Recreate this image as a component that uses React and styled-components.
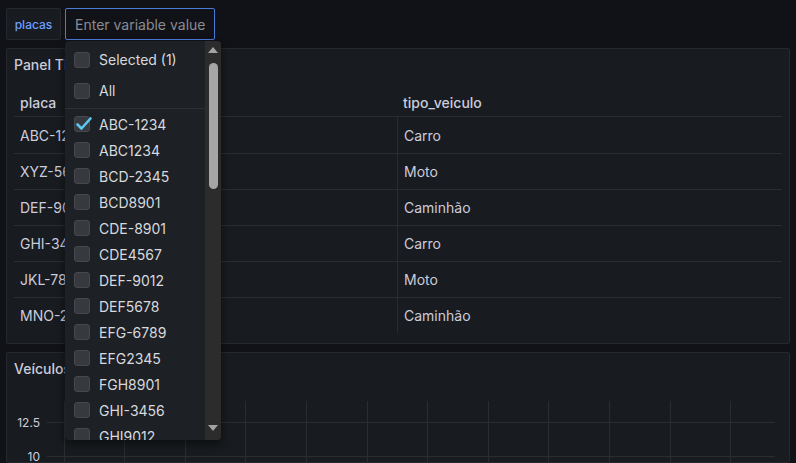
import React from "react";
import styled, { createGlobalStyle } from "styled-components";

const GlobalStyle = createGlobalStyle`
  html, body {
    margin: 0;
    padding: 0;
    background: #111217;
    overflow: hidden;
  }
  body {
    font-family: Inter, "Noto Sans", "Liberation Sans", sans-serif;
    color: #ccccdc;
  }
`;

const Page = styled.div`
  display: flex;
  flex-direction: column;
  gap: 8px;
  padding: 8px 6px 0 6px;
  height: 463px;
  box-sizing: border-box;
`;

const Toolbar = styled.div`
  display: flex;
  align-items: center;
  gap: 4px;
  flex: none;
`;

const VarLabel = styled.div`
  display: flex;
  align-items: center;
  justify-content: center;
  width: 55px;
  height: 32px;
  box-sizing: border-box;
  background: #181b1f;
  border: 1px solid #26282d;
  border-radius: 2px;
  color: #6e9fff;
  font-size: 12px;
  font-weight: 500;
`;

const InputWrap = styled.div`
  position: relative;
  z-index: 5;
`;

const Input = styled.input`
  width: 150px;
  height: 32px;
  box-sizing: border-box;
  background: #111217;
  border: 1px solid #4a7ad8;
  border-radius: 2px;
  padding: 0 9px;
  font-family: inherit;
  font-size: 14px;
  color: #ccccdc;
  outline: none;
  &::placeholder {
    color: #8a8b92;
  }
`;

const Menu = styled.div`
  position: absolute;
  top: calc(100% + 1px);
  left: 0;
  width: 156px;
  height: 399px;
  box-sizing: border-box;
  display: flex;
  background: #1d2025;
  border-radius: 4px;
  box-shadow: 0 4px 8px rgba(0, 0, 0, 0.5);
  overflow: hidden;
`;

const MenuList = styled.div`
  flex: 1;
  display: flex;
  flex-direction: column;
  overflow: hidden;
  padding-top: 3px;
`;

const Option = styled.div`
  display: flex;
  align-items: center;
  gap: 9px;
  flex: none;
  height: ${(p) => (p.$tall ? "31px" : "26px")};
  padding-left: 9px;
  font-size: 14px;
  color: #d8d9de;
  white-space: nowrap;
`;

const Separator = styled.div`
  flex: none;
  height: 1px;
  background: #2e3036;
  margin: 2px 0 2px;
`;

const Box = styled.span`
  position: relative;
  width: 16px;
  height: 16px;
  box-sizing: border-box;
  background: #37393e;
  border: 1px solid #46484e;
  border-radius: 3px;
  flex: none;
`;

const Check = styled.svg`
  position: absolute;
  left: 0;
  top: -2px;
`;

const Scrollbar = styled.div`
  width: 16px;
  flex: none;
  background: #2c2c2c;
  display: flex;
  flex-direction: column;
  align-items: center;
  padding-top: 6px;
`;

const Arrow = styled.div`
  width: 0;
  height: 0;
  border-left: 5px solid transparent;
  border-right: 5px solid transparent;
  ${(p) =>
    p.$down
      ? "border-top: 6px solid #a3a3a3;"
      : "border-bottom: 6px solid #a3a3a3;"}
`;

const Thumb = styled.div`
  width: 9px;
  height: 126px;
  margin-top: 10px;
  background: #a6a6a6;
  border-radius: 5px;
`;

const Spacer = styled.div`
  flex: 1;
`;

const BottomArrow = styled.div`
  padding-bottom: 9px;
`;

const Panel = styled.section`
  background: #181b1f;
  border: 1px solid #26282d;
  border-radius: 2px;
  display: flex;
  flex-direction: column;
  flex: ${(p) => (p.$grow ? "1 1 0" : "none")};
  min-height: 0;
  height: ${(p) => p.$height || "auto"};
  box-sizing: border-box;
  overflow: hidden;
`;

const PanelHeader = styled.div`
  flex: none;
  height: 31px;
  display: flex;
  align-items: center;
  padding: 0 7px;
  font-size: 14px;
  font-weight: 500;
  color: #ccccdc;
  white-space: nowrap;
`;

const Table = styled.div`
  margin: 8px 7px 0;
  display: grid;
  grid-template-columns: 383px 1fr;
`;

const HeadCell = styled.div`
  height: 28px;
  display: flex;
  align-items: center;
  padding-left: 6px;
  font-size: 14px;
  font-weight: 500;
  color: #ccccdc;
  border-bottom: 1px solid #2a2c31;
`;

const Cell = styled.div`
  height: 36px;
  display: flex;
  align-items: center;
  padding-left: ${(p) => (p.$second ? "6px" : "6px")};
  font-size: 14px;
  color: #ccccdc;
  border-top: ${(p) => (p.$first ? "none" : "1px solid #2a2c31")};
  border-left: ${(p) => (p.$second ? "1px solid #2a2c31" : "none")};
  box-sizing: border-box;
`;

const Chart = styled.div`
  flex: none;
  display: flex;
  margin-top: 17px;
`;

const Axis = styled.div`
  width: 40px;
  position: relative;
  flex: none;
  font-size: 12px;
  color: #ccccdc;
`;

const Tick = styled.span`
  position: absolute;
  right: 7px;
  transform: translateY(-50%);
`;

const options = [
  "ABC-1234",
  "ABC1234",
  "BCD-2345",
  "BCD8901",
  "CDE-8901",
  "CDE4567",
  "DEF-9012",
  "DEF5678",
  "EFG-6789",
  "EFG2345",
  "FGH8901",
  "GHI-3456",
  "GHI9012",
  "HIJ-4567",
];

const rows = [
  ["ABC-1234", "Carro"],
  ["XYZ-5678", "Moto"],
  ["DEF-9012", "Caminhão"],
  ["GHI-3456", "Carro"],
  ["JKL-7890", "Moto"],
  ["MNO-2345", "Caminhão"],
];

const vLines = [17, 77, 138, 198, 259, 320, 380, 441, 501, 562, 623, 683];

function CheckBox({ checked }) {
  return (
    <Box>
      {checked && (
        <Check width="18" height="18" viewBox="0 0 18 18">
          <path
            d="M2.5 9.5 L6.5 13.5 L15.5 3.5"
            fill="none"
            stroke="#5cc8f2"
            strokeWidth="2.6"
            strokeLinecap="round"
            strokeLinejoin="round"
          />
        </Check>
      )}
    </Box>
  );
}

export default function App() {
  return (
    <>
      <GlobalStyle />
      <Page>
        <Toolbar>
          <VarLabel>placas</VarLabel>
          <InputWrap>
            <Input placeholder="Enter variable value" />
            <Menu>
              <MenuList>
                <Option $tall>
                  <CheckBox />
                  Selected (1)
                </Option>
                <Option $tall>
                  <CheckBox />
                  All
                </Option>
                <Separator />
                {options.map((o, i) => (
                  <Option key={o}>
                    <CheckBox checked={i === 0} />
                    {o}
                  </Option>
                ))}
              </MenuList>
              <Scrollbar>
                <Arrow />
                <Thumb />
                <Spacer />
                <BottomArrow>
                  <Arrow $down />
                </BottomArrow>
              </Scrollbar>
            </Menu>
          </InputWrap>
        </Toolbar>

        <Panel $height="296px">
          <PanelHeader>Panel Title</PanelHeader>
          <Table>
            <HeadCell>placa</HeadCell>
            <HeadCell>tipo_veiculo</HeadCell>
            {rows.map(([p, t], i) => (
              <React.Fragment key={p}>
                <Cell $first={i === 0}>{p}</Cell>
                <Cell $first={i === 0} $second>
                  {t}
                </Cell>
              </React.Fragment>
            ))}
          </Table>
        </Panel>

        <Panel $grow>
          <PanelHeader>Veículos por tipo</PanelHeader>
          <Chart>
            <Axis>
              <Tick style={{ top: 21 }}>12.5</Tick>
              <Tick style={{ top: 55 }}>10</Tick>
            </Axis>
            <svg width="730" height="80">
              {vLines.map((x) => (
                <line
                  key={x}
                  x1={x + 0.5}
                  x2={x + 0.5}
                  y1="0"
                  y2="80"
                  stroke="#2a2c31"
                  strokeWidth="1"
                />
              ))}
              {[21, 55].map((y) => (
                <line
                  key={y}
                  x1="0"
                  x2="728"
                  y1={y + 0.5}
                  y2={y + 0.5}
                  stroke="#2a2c31"
                  strokeWidth="1"
                />
              ))}
            </svg>
          </Chart>
        </Panel>
      </Page>
    </>
  );
}
